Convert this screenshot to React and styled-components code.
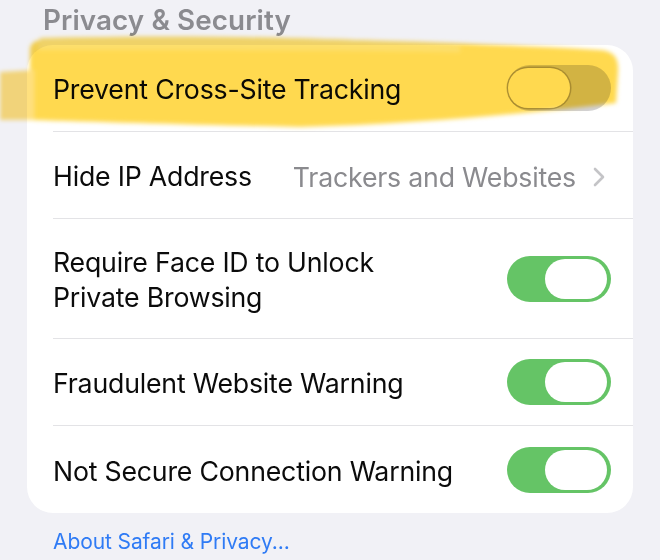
import React from "react";
import styled, { createGlobalStyle } from "styled-components";

const Global = createGlobalStyle`
  html, body { margin: 0; padding: 0; }
  body {
    background: #f1f1f6;
    font-family: "Inter", "Roboto", "Liberation Sans", sans-serif;
    -webkit-font-smoothing: antialiased;
    overflow: hidden;
  }
`;

const Page = styled.div`
  position: relative;
  width: 660px;
  height: 560px;
  overflow: hidden;
`;

const Header = styled.div`
  padding: 2px 0 0 43px;
  height: 43px;
  font-size: 27.8px;
  font-weight: 600;
  color: #8b8b90;
  line-height: 37px;
  letter-spacing: 0.1px;
`;

const Card = styled.div`
  margin: 0 27px;
  background: #ffffff;
  border-radius: 26px;
  padding-left: 26px;
`;

const Row = styled.div`
  display: flex;
  align-items: center;
  justify-content: space-between;
  height: ${(p) => (p.$tall ? 120 : 87)}px;
  padding: 3px 22px 0 0;
  border-bottom: ${(p) => (p.$last ? "none" : "1.5px solid #e3e3e6")};
  box-sizing: border-box;
`;

const Label = styled.div`
  font-size: 26.7px;
  color: #0b0b0b;
  line-height: 35px;
  letter-spacing: -0.2px;
`;

const Detail = styled.div`
  display: flex;
  align-items: center;
  gap: 17px;
  margin-right: 6px;
  font-size: 26.7px;
  color: #8a8a8e;
  letter-spacing: -0.2px;
`;

const Track = styled.div`
  position: relative;
  width: 104px;
  height: 46px;
  border-radius: 23px;
  margin-top: -3px;
  background: ${(p) => (p.$on ? "#65c466" : "#d2d2d6")};
  flex-shrink: 0;
`;

const Knob = styled.div`
  position: absolute;
  top: 3px;
  ${(p) => (p.$on ? "right: 4px;" : "left: 1px;")}
  width: 62px;
  height: 40px;
  border-radius: 20px;
  background: #ffffff;
  box-shadow: ${(p) => (p.$on ? "none" : "0 0 0 1.5px rgba(120,110,80,0.45)")};
`;

const Toggle = ({ on }) => (
  <Track $on={on}>
    <Knob $on={on} />
  </Track>
);

const Footer = styled.div`
  padding: 16px 0 0 53px;
  font-size: 21px;
  color: #2f7bf5;
  letter-spacing: -0.1px;
`;

const Highlight = styled.svg`
  position: absolute;
  left: 0;
  top: 0;
  width: 660px;
  height: 160px;
  mix-blend-mode: multiply;
  pointer-events: none;
`;

const Chevron = () => (
  <svg width="12" height="20" viewBox="0 0 12 20">
    <path d="M2 2 L10 10 L2 18" fill="none" stroke="#c4c4c7" strokeWidth="2.6" strokeLinecap="round" strokeLinejoin="round" />
  </svg>
);

export default function App() {
  return (
    <Page>
      <Global />
      <Header>Privacy &amp; Security</Header>
      <Card>
        <Row>
          <Label>Prevent Cross-Site Tracking</Label>
          <Toggle on={false} />
        </Row>
        <Row>
          <Label>Hide IP Address</Label>
          <Detail>
            Trackers and Websites
            <Chevron />
          </Detail>
        </Row>
        <Row $tall>
          <Label>
            Require Face ID to Unlock
            <br />
            Private Browsing
          </Label>
          <Toggle on />
        </Row>
        <Row>
          <Label>Fraudulent Website Warning</Label>
          <Toggle on />
        </Row>
        <Row $last>
          <Label>Not Secure Connection Warning</Label>
          <Toggle on />
        </Row>
      </Card>
      <Footer>About Safari &amp; Privacy...</Footer>
      <Highlight viewBox="0 0 660 160">
        <defs>
          <filter id="soft" x="-5%" y="-20%" width="110%" height="140%">
            <feGaussianBlur stdDeviation="2.2" />
          </filter>
        </defs>
        <g filter="url(#soft)">
          <path
            d="M40 40 C 200 34, 420 40, 600 50 C 614 51, 619 58, 618 72 L 616 103 C 540 112, 420 124, 300 127 C 200 125, 100 122, 30 120 L 30 50 C 30 44, 34 41, 40 40 Z"
            fill="#ffd94f"
          />
          <path d="M0 72 L 34 70 L 34 120 L 0 120 Z" fill="#ffe07e" />
          <path d="M40 38 C 200 34, 350 38, 460 46 L 460 52 C 300 50, 150 50, 38 50 Z" fill="#fddf6c" />
        </g>
      </Highlight>
    </Page>
  );
}
